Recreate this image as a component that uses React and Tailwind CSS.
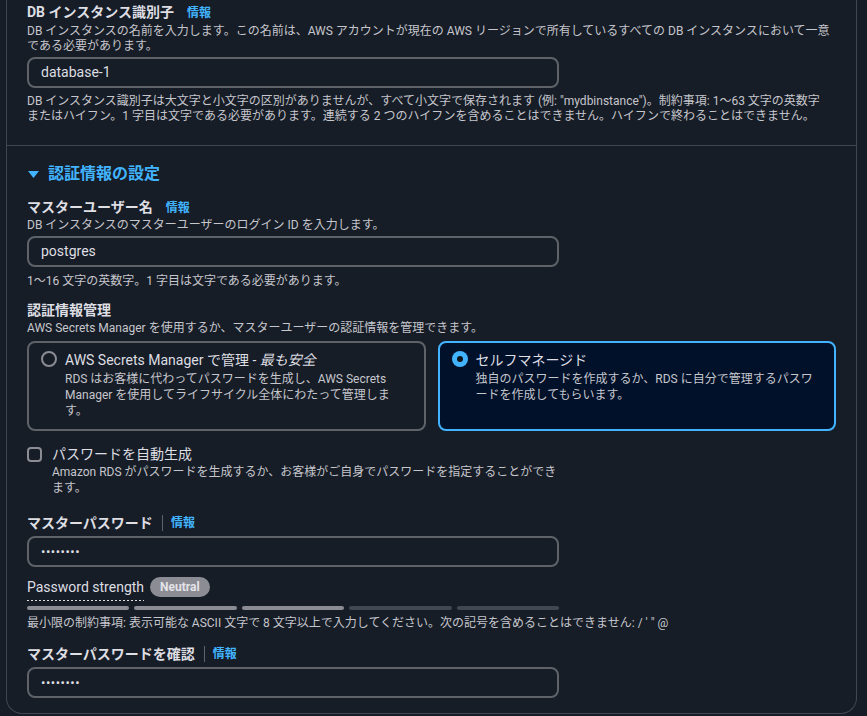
import React from 'react'

const desc = 'text-[12px] leading-4 text-[#c6c6cd]'
const label = 'text-[14px] leading-[18px] font-bold text-[#dedee3]'

function Info() {
  return <span className="text-[12px] leading-[18px] font-bold text-[#42b4ff]">情報</span>
}

function Field({ value, dots }) {
  return (
    <div className="w-[532px] h-[31px] rounded-lg border-2 border-[#5f6269] flex items-center pl-3">
      {dots ? (
        <span className="text-[13px] text-[#dedee3] tracking-[0.5px]">••••••••</span>
      ) : (
        <span className="text-[14px] text-[#dedee3]">{value}</span>
      )}
    </div>
  )
}

function Tile({ checked, title, children }) {
  return (
    <div
      className={
        checked
          ? 'h-[90px] rounded-lg border-2 border-[#42b4ff] bg-[#001129] pl-3 pr-3 pt-[7px] flex gap-2'
          : 'h-[90px] rounded-lg border-2 border-[#5f6269] pl-3 pr-3 pt-[7px] flex gap-2'
      }
    >
      {checked ? (
        <span className="mt-[1px] w-4 h-4 shrink-0 rounded-full bg-[#42b4ff] flex items-center justify-center">
          <span className="w-[6px] h-[6px] rounded-full bg-[#0f141a]" />
        </span>
      ) : (
        <span className="mt-[1px] w-4 h-4 shrink-0 rounded-full border-2 border-[#8c8c94]" />
      )}
      <div className="min-w-0">
        <div className="text-[14px] leading-5 text-[#dedee3]">{title}</div>
        <div className={desc + ' pt-px'}>{children}</div>
      </div>
    </div>
  )
}

export default function App() {
  return (
    <div className="min-h-screen bg-[#161d26] font-['Roboto','Noto_Sans_CJK_JP',sans-serif]">
      <div className="ml-[6px] w-[851px] border-x border-b border-[#424650] rounded-b-2xl">
        {/* インスタンス識別子 */}
        <section className="px-5 pt-[3px] pb-[21px]">
          <div className="flex items-baseline gap-[13px]">
            <span className={label}>DB インスタンス識別子</span>
            <Info />
          </div>
          <p className="text-[12px] leading-[15px] text-[#c6c6cd] mt-[2px]">
            DB インスタンスの名前を入力します。この名前は、AWS アカウントが現在の AWS リージョンで所有しているすべての DB インスタンスにおいて一意である必要があります。
          </p>
          <div className="mt-[3px]">
            <Field value="database-1" />
          </div>
          <p className="text-[12px] leading-[15px] text-[#c6c6cd] mt-[6px] pr-[6px]">
            DB インスタンス識別子は大文字と小文字の区別がありませんが、すべて小文字で保存されます (例: "mydbinstance")。制約事項: 1〜63 文字の英数字またはハイフン。1 字目は文字である必要があります。連続する 2 つのハイフンを含めることはできません。ハイフンで終わることはできません。
          </p>
        </section>

        {/* 認証情報の設定 */}
        <section className="border-t border-[#424650] px-5 pt-[18px] pb-[15px]">
          <div className="flex items-center gap-[9px] ml-px">
            <svg width="11" height="7" viewBox="0 0 11 7">
              <polygon points="0,0 11,0 5.5,7" fill="#42b4ff" />
            </svg>
            <h2 className="text-[16px] leading-5 font-bold text-[#42b4ff]">認証情報の設定</h2>
          </div>

          <div className="mt-[14px] flex items-baseline gap-[13px]">
            <span className={label}>マスターユーザー名</span>
            <Info />
          </div>
          <p className={desc}>DB インスタンスのマスターユーザーのログイン ID を入力します。</p>
          <div className="mt-[3px]">
            <Field value="postgres" />
          </div>
          <p className={desc + ' mt-[6px]'}>1〜16 文字の英数字。1 字目は文字である必要があります。</p>

          <div className={label + ' mt-[12px]'}>認証情報管理</div>
          <p className={desc + ' mt-px'}>AWS Secrets Manager を使用するか、マスターユーザーの認証情報を管理できます。</p>
          <div className="mt-[5px] grid grid-cols-2 gap-3">
            <Tile
              title={
                <>
                  AWS Secrets Manager で管理 - <i>最も安全</i>
                </>
              }
            >
              RDS はお客様に代わってパスワードを生成し、AWS Secrets Manager を使用してライフサイクル全体にわたって管理します。
            </Tile>
            <Tile checked title="セルフマネージド">
              独自のパスワードを作成するか、RDS に自分で管理するパスワードを作成してもらいます。
            </Tile>
          </div>

          <div className="mt-[14px] w-[532px]">
            <div className="flex items-center gap-[10px]">
              <span className="w-[15px] h-[15px] rounded-[4px] border-2 border-[#8c8c94] shrink-0" />
              <span className="text-[14px] leading-[18px] text-[#dedee3]">パスワードを自動生成</span>
            </div>
            <p className={desc + ' pl-[25px] mt-px'}>
              Amazon RDS がパスワードを生成するか、お客様がご自身でパスワードを指定することができます。
            </p>
          </div>

          <div className="mt-[18px] flex items-center">
            <span className={label}>マスターパスワード</span>
            <span className="ml-[9px] pl-2 border-l border-[#5f6269] h-4 flex items-center">
              <Info />
            </span>
          </div>
          <div className="mt-[4px]">
            <Field dots />
          </div>

          <div className="mt-[10px] flex items-start gap-[6px]">
            <div>
              <div className="text-[14px] leading-5 text-[#dedee3]">Password strength</div>
              <div className="mt-[3px] h-px bg-[repeating-linear-gradient(90deg,#dedee3_0_2px,transparent_2px_4px)]" />
            </div>
            <span className="h-5 px-[10px] rounded-full bg-[#8c8c94] text-[12px] font-bold text-[#e3e3e8] flex items-center">
              Neutral
            </span>
          </div>
          <div className="mt-[5px] w-[532px] flex gap-[5px]">
            <div className="flex-1 h-1 rounded-sm bg-[#8c8c94]" />
            <div className="flex-1 h-1 rounded-sm bg-[#8c8c94]" />
            <div className="flex-1 h-1 rounded-sm bg-[#8c8c94]" />
            <div className="flex-1 h-1 rounded-sm bg-[#424650]" />
            <div className="flex-1 h-1 rounded-sm bg-[#424650]" />
          </div>
          <p className={desc + ' mt-[5px]'}>
            最小限の制約事項: 表示可能な ASCII 文字で 8 文字以上で入力してください。次の記号を含めることはできません: / ' " @
          </p>

          <div className="mt-[14px] flex items-center">
            <span className={label}>マスターパスワードを確認</span>
            <span className="ml-[9px] pl-2 border-l border-[#5f6269] h-4 flex items-center">
              <Info />
            </span>
          </div>
          <div className="mt-[4px]">
            <Field dots />
          </div>
        </section>
      </div>
    </div>
  )
}
